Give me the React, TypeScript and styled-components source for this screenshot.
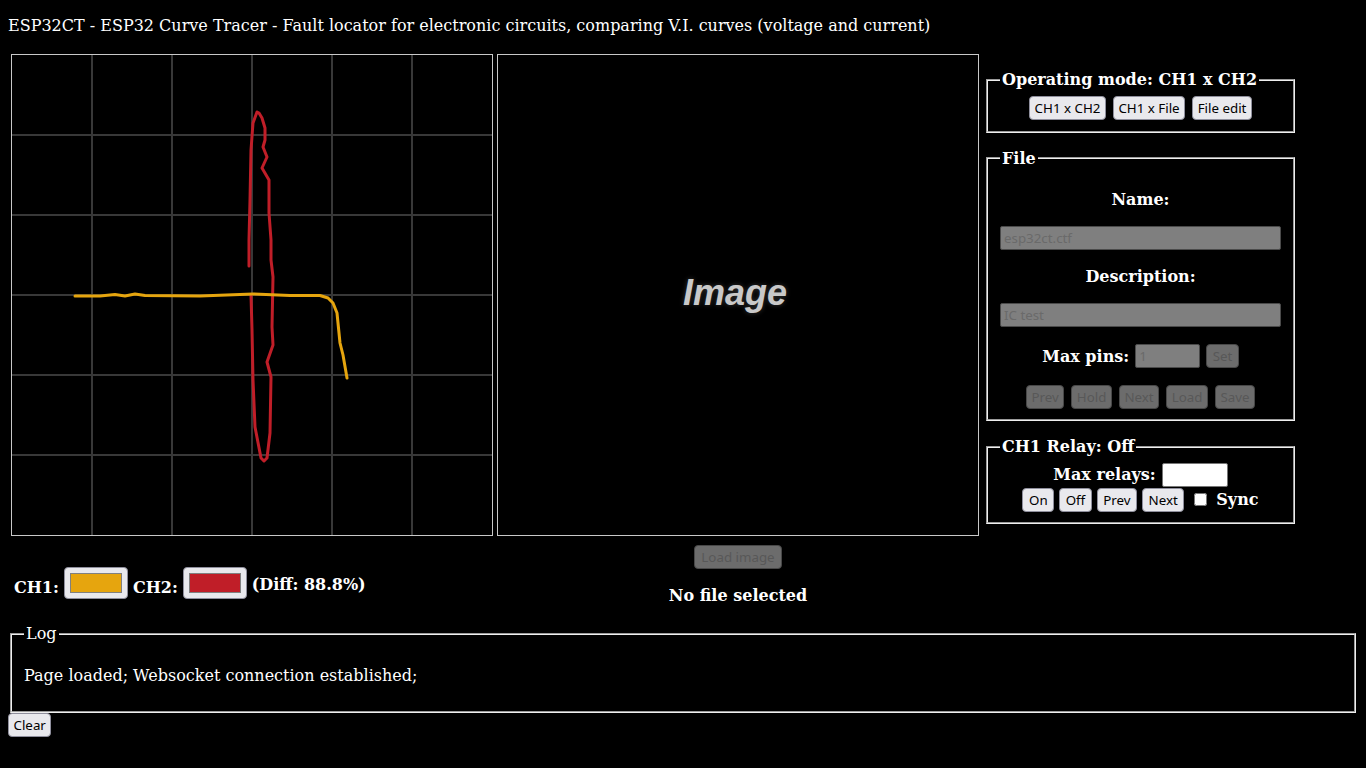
import React from "react";
import styled, { createGlobalStyle } from "styled-components";

const CH1_COLOR = "#e6a50e";
const CH2_COLOR = "#c01e28";

const GlobalStyle = createGlobalStyle`
  html, body { margin: 0; padding: 0; background: #000; }
  body { color: #fff; font-family: "DejaVu Serif", serif; font-size: 16px; }
`;

const Page = styled.div`
  padding: 8px;
`;

const Title = styled.div`
  padding-top: 8px;
  line-height: 19px;
`;

const Main = styled.div`
  display: flex;
  align-items: flex-start;
  margin-top: 19px;
  padding-left: 3px;
`;

const Column = styled.div<{ $center?: boolean; $offset?: number }>`
  display: flex;
  flex-direction: column;
  width: 482px;
  margin-left: ${(p) => p.$offset ?? 0}px;
  align-items: ${(p) => (p.$center ? "center" : "stretch")};
`;

const Frame = styled.div`
  width: 480px;
  height: 480px;
  border: 1px solid #c8c8c8;
  background: #000;
  display: flex;
  align-items: center;
  justify-content: center;
`;

const ImageLabel = styled.span`
  font-family: "Liberation Sans", Arial, sans-serif;
  font-weight: bold;
  font-style: italic;
  font-size: 36px;
  color: #c9c9c9;
  text-shadow: 0 0 5px rgba(90, 90, 90, 0.6);
  margin-right: 6px;
  margin-bottom: 4px;
`;

const ChannelRow = styled.div`
  display: flex;
  align-items: flex-end;
  gap: 5px;
  margin-top: 31px;
  padding-left: 3px;
  font-weight: bold;
`;

const ChLabel = styled.span<{ $lift?: number }>`
  line-height: 19px;
  padding-bottom: ${(p) => p.$lift ?? 2}px;
`;

const Swatch = styled.div`
  width: 64px;
  height: 32px;
  box-sizing: border-box;
  padding: 5px;
  background: #e9e9ed;
  border: 1px solid #8f8f9d;
  border-radius: 4px;
`;

const SwatchFill = styled.div<{ $color: string }>`
  height: 100%;
  box-sizing: border-box;
  border: 1px solid #808080;
  background: ${(p) => p.$color};
`;

const Button = styled.button<{ $pad?: number }>`
  box-sizing: border-box;
  height: 24px;
  font-family: "Noto Sans", "Open Sans", sans-serif;
  font-size: 13.33px;
  line-height: 18px;
  padding: 0 ${(p) => p.$pad ?? 4.5}px;
  margin: 0;
  background: #e9e9ed;
  color: #000;
  border: 1px solid #8f8f9d;
  border-radius: 4px;

  &:disabled {
    background: #6c6c6c;
    color: #585858;
    border-color: #484848;
  }
`;

const LoadButton = styled(Button)`
  margin-top: 9px;
`;

const FileName = styled.div`
  margin-top: 17px;
  line-height: 19px;
  font-weight: bold;
`;

const RightPanel = styled.div`
  width: 313px;
  margin-left: 5px;
  display: flex;
  flex-direction: column;
`;

const Group = styled.fieldset<{ $top?: number }>`
  margin: ${(p) => p.$top ?? 16}px 2px 0;
  padding: 6.6px 12px 10px;
  min-width: 0;
`;

const Legend = styled.legend<{ $bold?: boolean }>`
  padding: 0 2px;
  font-weight: ${(p) => (p.$bold ? "bold" : "normal")};
`;

const ButtonRow = styled.div<{ $gap: number; $mt?: number; $mb?: number }>`
  display: flex;
  justify-content: center;
  align-items: center;
  gap: ${(p) => p.$gap}px;
  margin-top: ${(p) => p.$mt ?? 0}px;
  margin-bottom: ${(p) => p.$mb ?? 0}px;
`;

const FileBody = styled.div`
  display: flex;
  flex-direction: column;
  align-items: center;
  gap: 17px;
  padding-top: 16px;
`;

const FieldLabel = styled.div`
  font-weight: bold;
  line-height: 19px;
`;

const DisabledInput = styled.input`
  box-sizing: border-box;
  height: 24px;
  background: #7f7f7f;
  color: #6a6a6a;
  border: 1px solid #4a4a4a;
  border-radius: 2px;
  padding: 1px 3px;
  font-family: "Noto Sans", "Open Sans", sans-serif;
  font-size: 13.33px;
`;

const WideInput = styled(DisabledInput)`
  align-self: stretch;
  width: 100%;
`;

const SmallInput = styled(DisabledInput)`
  width: 65px;
`;

const InlineRow = styled.div`
  display: flex;
  justify-content: center;
  align-items: center;
  gap: 6px;
`;

const RelayInput = styled.input`
  box-sizing: border-box;
  width: 66px;
  height: 24px;
  background: #fff;
  border: 1px solid #767676;
  border-radius: 2px;
`;

const Check = styled.input`
  margin: 0 4px 0 5px;
  width: 13px;
  height: 13px;
`;

const LogText = styled.p`
  margin: 16px 0;
  line-height: 19px;
`;

const ClearButton = styled(Button)`
  margin-top: 0;
`;

const gridLines = [80, 160, 240, 320, 400];

const redPts = [
  [237, 211], [237, 185], [238, 145], [239, 95], [241, 68], [245, 57], [247, 58],
  [250, 63], [253, 73], [253, 85], [251, 92], [255, 102], [250, 113], [257, 125],
  [257, 158], [259, 185], [259, 205], [261, 222], [260, 272], [261, 290], [255, 307],
  [259, 322], [258, 378], [255, 403], [252, 406], [249, 403], [243, 372], [241, 325],
  [240, 275], [239, 240],
];

const yellowPts = [
  [63, 241], [88, 241], [103, 239.5], [113, 241], [123, 239], [133, 240.5],
  [188, 241], [241, 239], [278, 240.5], [308, 240.5], [316, 243], [321, 248],
  [325, 258], [328, 288], [331, 300], [335, 323],
];

const toPts = (a: number[][]) => a.map((p) => p.join(",")).join(" ");

function Scope() {
  return (
    <svg width="480" height="480" viewBox="0 0 480 480">
      {gridLines.map((v) => (
        <g key={v}>
          <line x1={v} y1={0} x2={v} y2={480} stroke="#383838" strokeWidth="2" />
          <line x1={0} y1={v} x2={480} y2={v} stroke="#383838" strokeWidth="2" />
        </g>
      ))}
      <polyline points={toPts(redPts)} fill="none" stroke={CH2_COLOR} strokeWidth="3" strokeLinejoin="round" strokeLinecap="round" />
      <polyline points={toPts(yellowPts)} fill="none" stroke={CH1_COLOR} strokeWidth="3" strokeLinejoin="round" strokeLinecap="round" />
    </svg>
  );
}

export default function App() {
  return (
    <Page>
      <GlobalStyle />
      <Title>ESP32CT - ESP32 Curve Tracer - Fault locator for electronic circuits, comparing V.I. curves (voltage and current)</Title>
      <Main>
        <Column>
          <Frame>
            <Scope />
          </Frame>
          <ChannelRow>
            <ChLabel>CH1:</ChLabel>
            <Swatch><SwatchFill $color={CH1_COLOR} /></Swatch>
            <ChLabel>CH2:</ChLabel>
            <Swatch><SwatchFill $color={CH2_COLOR} /></Swatch>
            <ChLabel $lift={5}>(Diff: 88.8%)</ChLabel>
          </ChannelRow>
        </Column>
        <Column $center $offset={4}>
          <Frame>
            <ImageLabel>Image</ImageLabel>
          </Frame>
          <LoadButton disabled $pad={6}>Load image</LoadButton>
          <FileName>No file selected</FileName>
        </Column>
        <RightPanel>
          <Group>
            <Legend $bold>Operating mode: CH1 x CH2</Legend>
            <ButtonRow $gap={7} $mb={1}>
              <Button>CH1 x CH2</Button>
              <Button>CH1 x File</Button>
              <Button>File edit</Button>
            </ButtonRow>
          </Group>
          <Group>
            <Legend $bold>File</Legend>
            <FileBody>
              <FieldLabel>Name:</FieldLabel>
              <WideInput disabled defaultValue="esp32ct.ctf" />
              <FieldLabel>Description:</FieldLabel>
              <WideInput disabled defaultValue="IC test" />
              <InlineRow>
                <FieldLabel>Max pins:</FieldLabel>
                <SmallInput disabled defaultValue="1" />
                <Button disabled $pad={5.5}>Set</Button>
              </InlineRow>
              <ButtonRow $gap={7}>
                <Button disabled>Prev</Button>
                <Button disabled>Hold</Button>
                <Button disabled>Next</Button>
                <Button disabled>Load</Button>
                <Button disabled>Save</Button>
              </ButtonRow>
            </FileBody>
          </Group>
          <Group>
            <Legend $bold>CH1 Relay: Off</Legend>
            <InlineRow>
              <FieldLabel>Max relays:</FieldLabel>
              <RelayInput />
            </InlineRow>
            <ButtonRow $gap={5} $mt={1}>
              <Button $pad={5.5}>On</Button>
              <Button $pad={5.5}>Off</Button>
              <Button $pad={5.5}>Prev</Button>
              <Button $pad={5.5}>Next</Button>
              <Check type="checkbox" />
              <FieldLabel>Sync</FieldLabel>
            </ButtonRow>
          </Group>
        </RightPanel>
      </Main>
      <Group $top={19}>
        <Legend>Log</Legend>
        <LogText>Page loaded; Websocket connection established;</LogText>
      </Group>
      <ClearButton>Clear</ClearButton>
    </Page>
  );
}
